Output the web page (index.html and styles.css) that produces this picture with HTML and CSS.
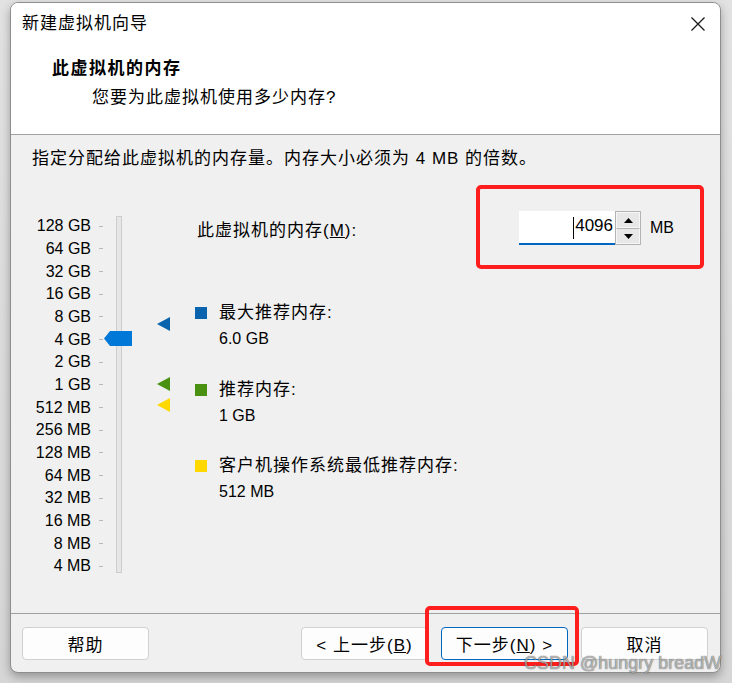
FILE: index.html
```html
<!DOCTYPE html>
<html lang="zh-CN">
<head>
<meta charset="utf-8">
<title>新建虚拟机向导</title>
<link rel="stylesheet" href="styles.css">
</head>
<body>
<div class="window">
  <header class="head">
    <div class="titlebar">
      <span class="title">新建虚拟机向导</span>
      <svg class="close" width="14" height="14" viewBox="0 0 14 14"><path d="M0.5 0.5 L13.5 13.5 M13.5 0.5 L0.5 13.5" stroke="#1a1a1a" stroke-width="1.3" fill="none"/></svg>
    </div>
    <div class="heading">此虚拟机的内存</div>
    <div class="subheading">您要为此虚拟机使用多少内存?</div>
  </header>
  <main class="content">
    <p class="intro">指定分配给此虚拟机的内存量。内存大小必须为 4 MB 的倍数。</p>
    <div class="main">
      <div class="slider">
        <div class="labels">
          <div class="lbl"><span>128 GB</span><i class="tick"></i></div>
          <div class="lbl"><span>64 GB</span><i class="tick"></i></div>
          <div class="lbl"><span>32 GB</span><i class="tick"></i></div>
          <div class="lbl"><span>16 GB</span><i class="tick"></i></div>
          <div class="lbl"><span>8 GB</span><i class="tick"></i></div>
          <div class="lbl"><span>4 GB</span><i class="tick"></i></div>
          <div class="lbl"><span>2 GB</span><i class="tick"></i></div>
          <div class="lbl"><span>1 GB</span><i class="tick"></i></div>
          <div class="lbl"><span>512 MB</span><i class="tick"></i></div>
          <div class="lbl"><span>256 MB</span><i class="tick"></i></div>
          <div class="lbl"><span>128 MB</span><i class="tick"></i></div>
          <div class="lbl"><span>64 MB</span><i class="tick"></i></div>
          <div class="lbl"><span>32 MB</span><i class="tick"></i></div>
          <div class="lbl"><span>16 MB</span><i class="tick"></i></div>
          <div class="lbl"><span>8 MB</span><i class="tick"></i></div>
          <div class="lbl"><span>4 MB</span><i class="tick"></i></div>
        </div>
        <div class="track"></div>
        <svg class="thumb" width="28" height="15" viewBox="0 0 28 15"><polygon points="0,7.5 6,0 28,0 28,15 6,15" fill="#0078d7"/></svg>
        <svg class="marker marker-max" width="13" height="14" viewBox="0 0 13 14"><polygon points="0,7 13,0 13,14" fill="#0a64ad"/></svg>
        <svg class="marker marker-rec" width="13" height="14" viewBox="0 0 13 14"><polygon points="0,7 13,0 13,14" fill="#4a9112"/></svg>
        <svg class="marker marker-min" width="13" height="14" viewBox="0 0 13 14"><polygon points="0,7 13,0 13,14" fill="#ffd800"/></svg>
      </div>
      <div class="info">
        <div class="mem-row">
          <label class="mem-label">此虚拟机的内存(<u>M</u>):</label>
          <div class="field">
            <div class="input"><i class="caret"></i>4096</div>
            <div class="spin">
              <div class="spin-btn"><svg width="9" height="5" viewBox="0 0 9 5"><polygon points="4.5,0 9,5 0,5" fill="#000"/></svg></div>
              <div class="spin-btn"><svg width="9" height="5" viewBox="0 0 9 5"><polygon points="0,0 9,0 4.5,5" fill="#000"/></svg></div>
            </div>
          </div>
          <span class="unit">MB</span>
        </div>
        <div class="legend">
          <div class="item">
            <i class="sq sq-max"></i>
            <div class="item-title">最大推荐内存:</div>
            <div class="item-value">6.0 GB</div>
          </div>
          <div class="item">
            <i class="sq sq-rec"></i>
            <div class="item-title">推荐内存:</div>
            <div class="item-value">1 GB</div>
          </div>
          <div class="item">
            <i class="sq sq-min"></i>
            <div class="item-title">客户机操作系统最低推荐内存:</div>
            <div class="item-value">512 MB</div>
          </div>
        </div>
      </div>
    </div>
  </main>
  <footer class="foot">
    <button class="btn">帮助</button>
    <div class="nav">
      <button class="btn">&lt; 上一步(<u>B</u>)</button>
      <button class="btn btn-default">下一步(<u>N</u>) &gt;</button>
      <button class="btn">取消</button>
    </div>
  </footer>
</div>
<div class="annot annot-mem"></div>
<div class="annot annot-next"></div>
<div class="watermark">CSDN @hungry breadW</div>
</body>
</html>
```

FILE: styles.css
```css
* { box-sizing: border-box; }

html, body {
  margin: 0;
  padding: 0;
}

body {
  width: 732px;
  height: 683px;
  overflow: hidden;
  background: linear-gradient(to bottom, #e2e2e2 0%, #d6d6d6 100%);
  font-family: "Liberation Sans", "Noto Sans CJK SC", sans-serif;
  color: #000;
}

.window {
  margin: 2px 0 0 10px;
  width: 711px;
  height: 671px;
  border: 1px solid #8e8e8e;
  border-radius: 8px;
  overflow: hidden;
  background: #f0f0f0;
  box-shadow: 0 4px 10px rgba(0, 0, 0, 0.3);
}

.head {
  height: 132px;
  background: #fff;
  border-bottom: 1px solid #a0a0a0;
}

.titlebar {
  height: 40px;
  display: flex;
  align-items: center;
  justify-content: space-between;
  padding: 2px 15px 0 11px;
}

.title {
  font-size: 17px;
  letter-spacing: 1px;
  line-height: 24px;
}

.close { display: block; }

.heading {
  margin-top: 14px;
  padding-left: 41px;
  font-size: 17px;
  font-weight: bold;
  letter-spacing: 1.5px;
  line-height: 24px;
}

.subheading {
  margin-top: 5px;
  padding-left: 81px;
  font-size: 17px;
  letter-spacing: 1px;
  line-height: 24px;
}

.content {
  height: 479px;
  border-bottom: 1px solid #a0a0a0;
  padding-top: 13px;
}

.intro {
  margin: 0;
  padding-left: 21px;
  font-size: 17px;
  letter-spacing: 1px;
  line-height: 22px;
}

.main {
  margin-top: 34px;
  display: flex;
  align-items: flex-start;
}

.slider {
  position: relative;
  width: 184px;
  display: flex;
  align-items: flex-start;
}

.labels {
  margin-top: 11px;
}

.lbl {
  height: 22.67px;
  display: flex;
  align-items: center;
  font-size: 16px;
}

.lbl span {
  width: 80px;
  text-align: right;
}

.tick {
  margin-left: 8px;
  width: 4px;
  height: 1px;
  background: #b9b9b9;
}

.track {
  margin-left: 13px;
  margin-top: 12px;
  width: 6px;
  height: 357px;
  background: #e6e6e6;
  border: 1px solid #cdcdcd;
}

.thumb {
  position: absolute;
  left: 93px;
  top: 127px;
}

.marker {
  position: absolute;
  left: 146px;
}

.marker-max { top: 113px; }
.marker-rec { top: 173px; }
.marker-min { top: 194px; }

.info {
  flex: 1;
}

.mem-row {
  margin-top: 7px;
  height: 34px;
  display: flex;
  align-items: center;
}

.mem-label {
  width: 324px;
  padding-left: 2px;
  font-size: 17px;
  letter-spacing: 1px;
}

.field {
  display: flex;
  height: 34px;
}

.input {
  position: relative;
  width: 96px;
  height: 34px;
  background: #fff;
  border-bottom: 2px solid #0067c0;
  text-align: right;
  padding-right: 2px;
  font-size: 17px;
  line-height: 30px;
}

.caret {
  position: absolute;
  left: 54px;
  top: 6px;
  width: 1px;
  height: 22px;
  background: #000;
}

.spin {
  width: 26px;
  height: 34px;
  border: 1px solid #b3b3b3;
  display: flex;
  flex-direction: column;
}

.spin-btn {
  flex: 1;
  display: flex;
  align-items: center;
  justify-content: center;
  background: #e7e7e7;
  border: 1px solid #f6f6f6;
}

.spin-btn + .spin-btn {
  border-top: 1px solid #b3b3b3;
}

.spin-btn svg { display: block; }

.unit {
  margin-left: 9px;
  font-size: 16px;
}

.legend {
  margin-top: 57px;
  display: flex;
  flex-direction: column;
  gap: 26.5px;
}

.item {
  display: grid;
  grid-template-columns: 12px auto;
  column-gap: 12px;
}

.sq {
  grid-row: 1;
  grid-column: 1;
  width: 12px;
  height: 12px;
  margin-top: 5px;
}

.sq-max { background: #0a64ad; }
.sq-rec { background: #4a9112; }
.sq-min { background: #ffd800; }

.item-title {
  grid-row: 1;
  grid-column: 2;
  font-size: 17px;
  letter-spacing: 1px;
  line-height: 22px;
}

.item-value {
  grid-column: 2;
  padding-top: 2px;
  font-size: 16px;
  line-height: 26px;
}

.foot {
  height: 58px;
  padding: 13px 12px 0 11px;
  display: flex;
  align-items: flex-start;
  justify-content: space-between;
}

.nav {
  display: flex;
  gap: 13px;
}

.btn {
  width: 127px;
  height: 33px;
  padding: 0;
  background: #fdfdfd;
  border: 1px solid #d0d0d0;
  border-radius: 4px;
  font-family: "Liberation Sans", "Noto Sans CJK SC", sans-serif;
  font-size: 17px;
  letter-spacing: 1px;
  color: #000;
}

.btn-default {
  border-color: #0067c0;
}

.annot {
  position: absolute;
  border: 4px solid #ff1e1e;
  border-radius: 5px;
}

.annot-mem {
  left: 476px;
  top: 185px;
  width: 228px;
  height: 84px;
}

.annot-next {
  left: 425px;
  top: 606px;
  width: 154px;
  height: 60px;
}

.watermark {
  position: absolute;
  left: 524px;
  top: 651px;
  font-family: "Liberation Sans", sans-serif;
  font-size: 18px;
  line-height: 24px;
  color: rgba(255, 255, 255, 0.55);
  text-shadow: 0 0 1px rgba(0, 0, 0, 0.55), 0 0 1px rgba(0, 0, 0, 0.4);
  white-space: nowrap;
}
```
